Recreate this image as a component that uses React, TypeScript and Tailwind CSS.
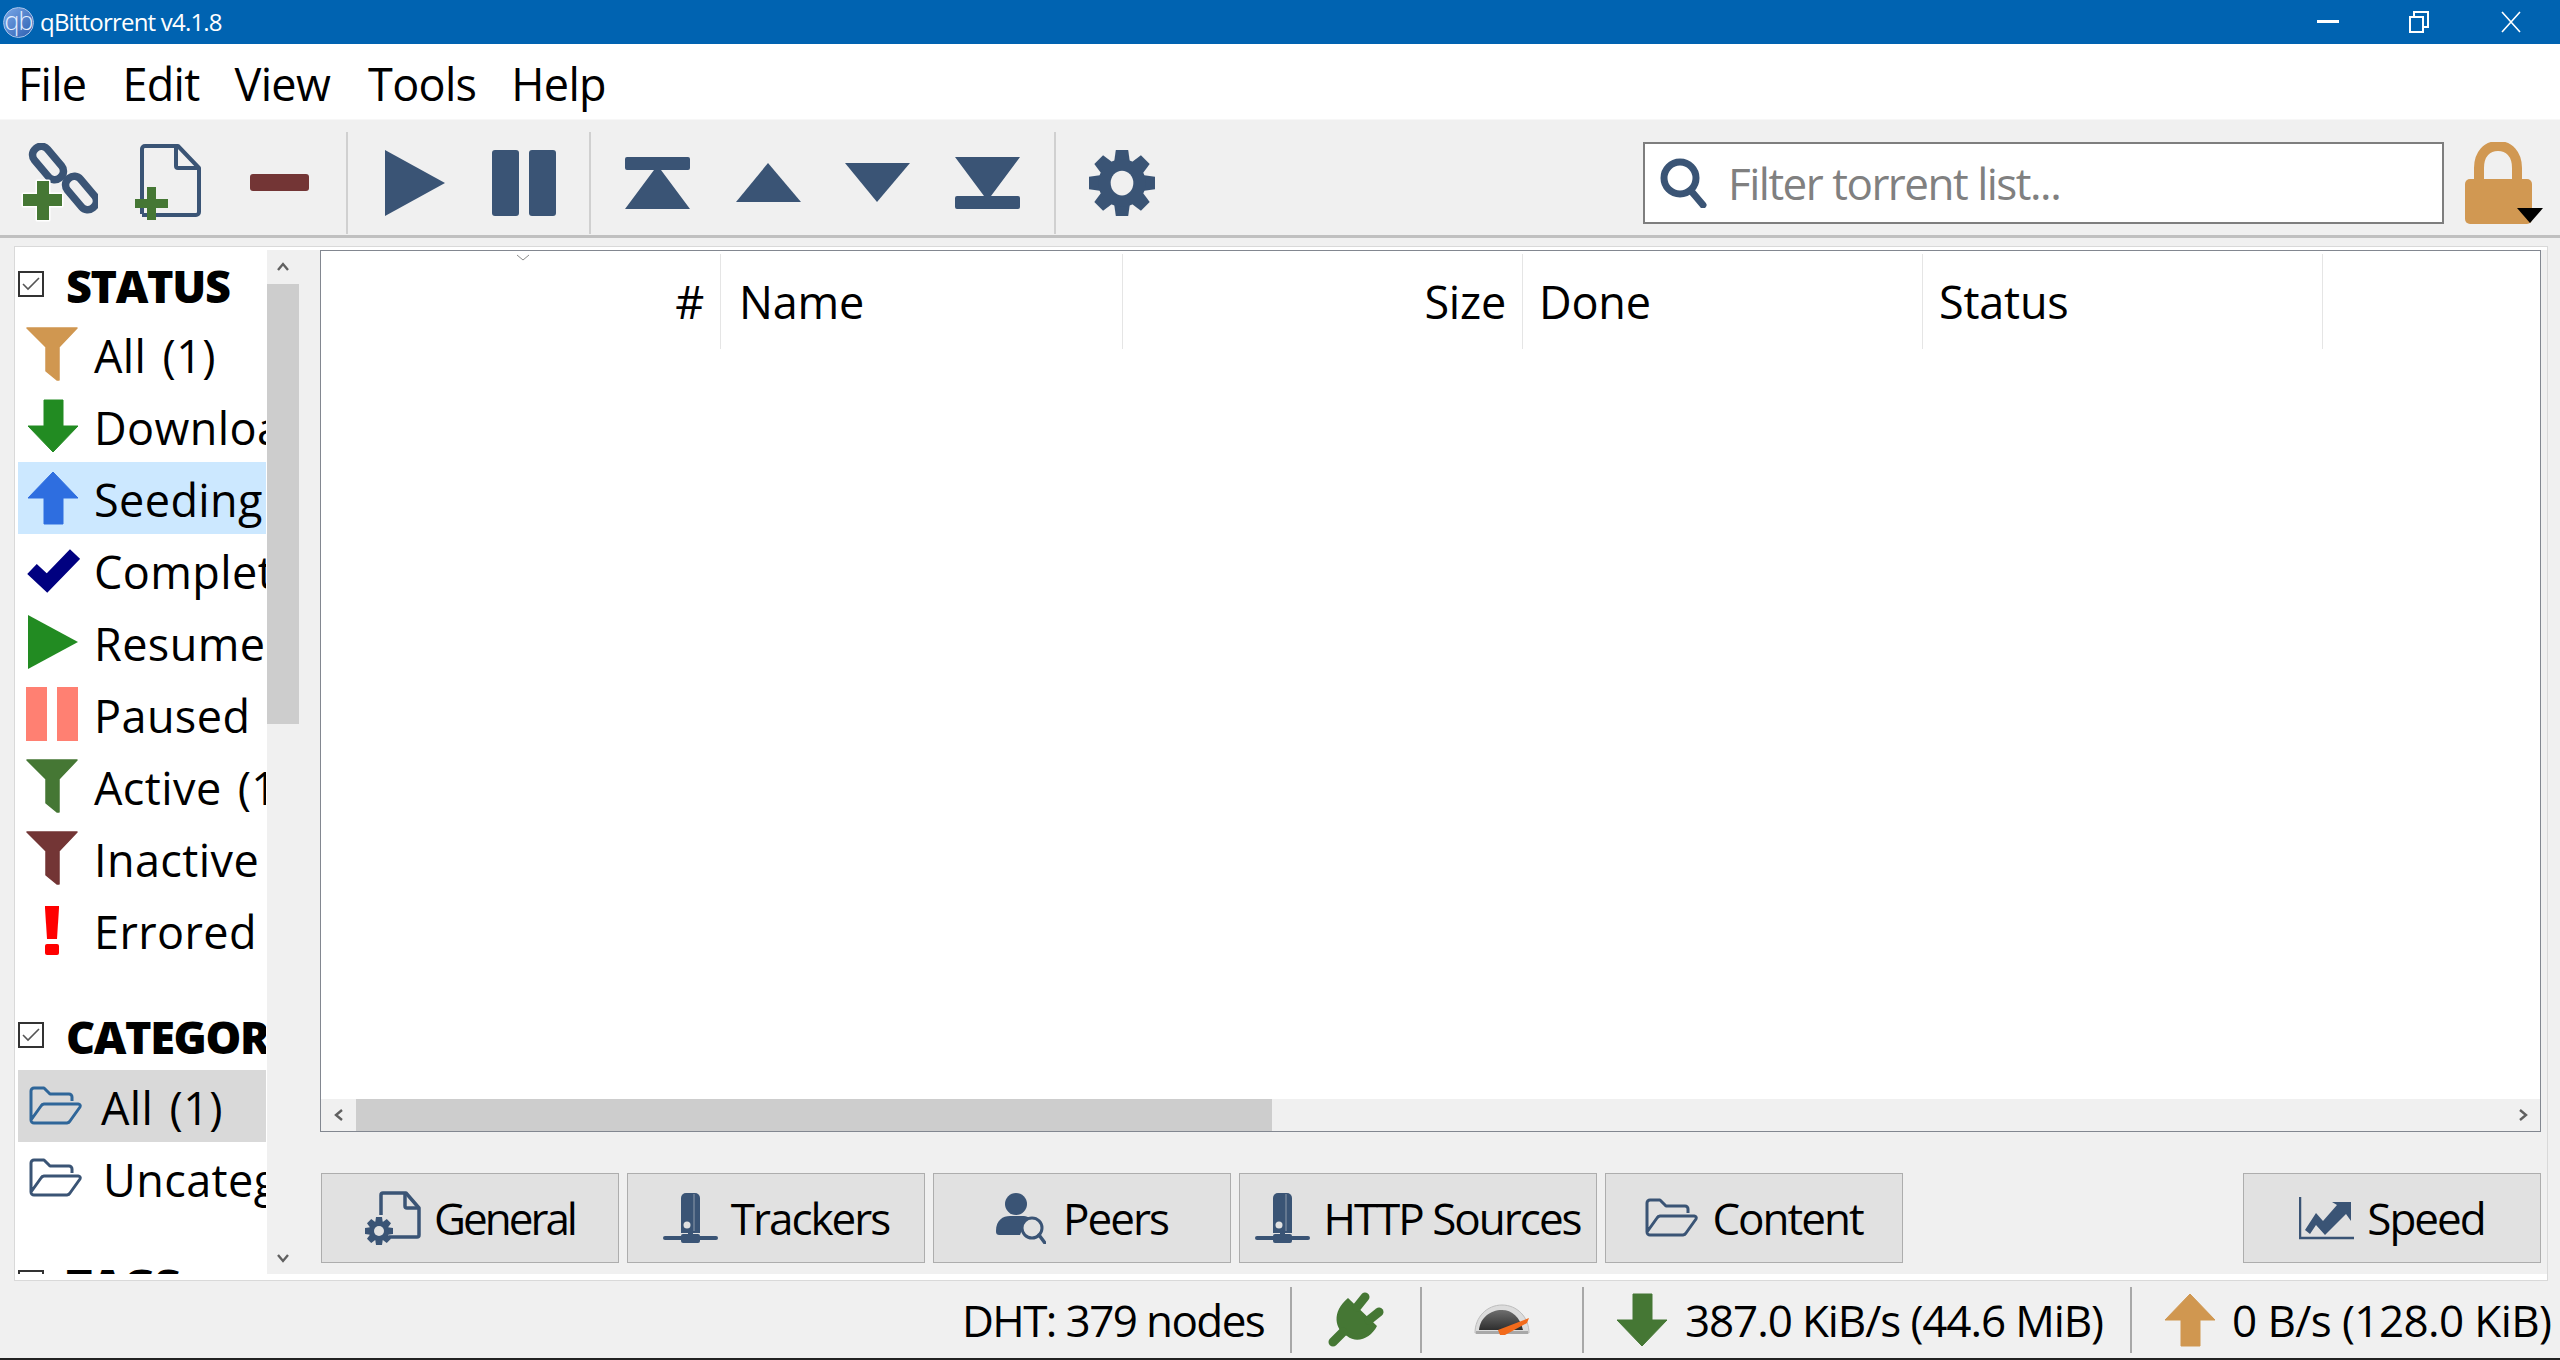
import React from 'react';

const NAVY = '#3a5475';

function Funnel({ color }: { color: string }) {
  return (
    <svg width="54" height="54" viewBox="0 0 54 54">
      <path d="M1 1H51L33 20V53L31 53L20 44V20Z" fill={color} stroke={color} strokeWidth="1.5" strokeLinejoin="round" />
    </svg>
  );
}

function ArrowDown({ color, w = 54 }: { color: string; w?: number }) {
  return (
    <svg width={w} height="54" viewBox="0 0 54 54">
      <path d="M18 1H37V27H52L27 53L2 27H18Z" fill={color} stroke={color} strokeWidth="1" strokeLinejoin="round" />
    </svg>
  );
}

function ArrowUp({ color }: { color: string }) {
  return (
    <svg width="54" height="54" viewBox="0 0 54 54">
      <path d="M18 53H37V27H52L27 1L2 27H18Z" fill={color} stroke={color} strokeWidth="1" strokeLinejoin="round" />
    </svg>
  );
}

function CheckIcon() {
  return (
    <svg width="54" height="54" viewBox="0 0 54 54">
      <path d="M6 26L21 40L49 11" fill="none" stroke="#000080" strokeWidth="14" />
    </svg>
  );
}

function PlayGreen() {
  return (
    <svg width="54" height="54" viewBox="0 0 54 54">
      <path d="M2 0L52 27L2 54Z" fill="#228b22" />
    </svg>
  );
}

function PauseRed() {
  return (
    <svg width="54" height="54" viewBox="0 0 54 54">
      <rect x="0" y="0" width="21" height="54" fill="#ff8072" />
      <rect x="31" y="0" width="21" height="54" fill="#ff8072" />
    </svg>
  );
}

function Exclaim() {
  return (
    <svg width="54" height="54" viewBox="0 0 54 54">
      <path d="M19 3H33V5L31 36H21L19 5Z" fill="#ff0000" />
      <rect x="19" y="41" width="14" height="11" rx="2" fill="#ff0000" />
    </svg>
  );
}

function Folder({ color, w = 54, h = 40, sw = 3 }: { color: string; w?: number; h?: number; sw?: number }) {
  return (
    <svg width={w} height={h} viewBox="0 0 54 40">
      <path
        d="M2 34V5a3 3 0 0 1 3-3H15L21 8H40a3 3 0 0 1 3 3V15M2 34L12 20a4 4 0 0 1 3-2H49a2 2 0 0 1 2 3L41 35a4 4 0 0 1-3 2H5a3 3 0 0 1-3-3Z"
        fill="none"
        stroke={color}
        strokeWidth={sw}
        strokeLinejoin="round"
      />
    </svg>
  );
}

function Gear({ size, hole, color = NAVY }: { size: number; hole: string; color?: string }) {
  return (
    <svg width={size} height={size} viewBox="0 0 64 64">
      {[0, 45, 90, 135, 180, 225, 270, 315].map((a) => (
        <path key={a} d="M26 0H38L40 14H24Z" fill={color} transform={`rotate(${a} 32 32)`} />
      ))}
      <circle cx="32" cy="32" r="23" fill={color} />
      <ellipse cx="32" cy="32" rx="11" ry="12" fill={hole} />
    </svg>
  );
}

function LinkIcon() {
  return (
    <svg width="78" height="79" viewBox="0 0 78 79">
      <g fill="none" stroke={NAVY} strokeWidth="7.5">
        <rect x="9" y="11.5" width="38" height="17" rx="8" transform="rotate(50 28 20)" />
        <rect x="42" y="41.5" width="38" height="17" rx="8" transform="rotate(50 61 50)" />
      </g>
      <path d="M17 38H29V51H42V63H29V77H17V63H3V51H17Z" fill="#457734" stroke="#ffffff" strokeWidth="3" paintOrder="stroke" strokeLinejoin="round" />
    </svg>
  );
}

function FileAdd() {
  return (
    <svg width="68" height="78" viewBox="0 0 68 78">
      <g fill="none" stroke={NAVY} strokeWidth="4" strokeLinejoin="round">
        <path d="M7 70V5a3 3 0 0 1 3-3H43L64 24V68a3 3 0 0 1-3 3H7" />
        <path d="M41 3V22a2 2 0 0 0 2 2H63" />
      </g>
      <path d="M12 43H21V55H33V64H21V76H12V64H0V55H12Z" fill="#457734" />
    </svg>
  );
}

function Poly({ d, w, h }: { d: string; w: number; h: number }) {
  return (
    <svg width={w} height={h} viewBox={`0 0 ${w} ${h}`}>
      <path d={d} fill={NAVY} />
    </svg>
  );
}

function DocGear() {
  return (
    <svg width="56" height="54" viewBox="0 0 56 54">
      <g fill="none" stroke={NAVY} strokeWidth="3.5" strokeLinejoin="round">
        <path d="M16 24V4a2 2 0 0 1 2-2H41L54 17V44a2 2 0 0 1-2 2H24" />
        <path d="M40 3V15a2 2 0 0 0 2 2H53" />
      </g>
      <g transform="translate(0 26)">
        {[0, 45, 90, 135, 180, 225, 270, 315].map((a) => (
          <path key={a} d="M11 0H17L18 7H10Z" fill={NAVY} transform={`rotate(${a} 14 14)`} />
        ))}
        <circle cx="14" cy="14" r="10" fill={NAVY} />
        <circle cx="14" cy="14" r="5" fill="#e1e1e1" />
      </g>
    </svg>
  );
}

function Server() {
  return (
    <svg width="55" height="50" viewBox="0 0 55 50">
      <path d="M18 5a5 5 0 0 1 5-5H32a5 5 0 0 1 5 5V40H18Z" fill={NAVY} />
      <path d="M31 1V38" stroke="#e1e1e1" strokeWidth="1" opacity="0.5" />
      <circle cx="24" cy="32" r="3.5" fill="#e1e1e1" />
      <rect x="25" y="38" width="5" height="8" fill={NAVY} />
      <rect x="0" y="43" width="55" height="4" rx="2" fill={NAVY} />
      <rect x="18" y="41" width="19" height="9" rx="2" fill={NAVY} />
    </svg>
  );
}

function PeersIcon() {
  return (
    <svg width="50" height="51" viewBox="0 0 50 51">
      <circle cx="20" cy="11" r="11" fill={NAVY} />
      <path d="M0 38C0 27 7 23 14 23H26C31 23 35 25 37 28L28 32L24 42H4C1 42 0 41 0 38Z" fill={NAVY} />
      <circle cx="36" cy="35" r="10" fill="#e1e1e1" stroke={NAVY} strokeWidth="3" />
      <path d="M43 42L49 50" stroke={NAVY} strokeWidth="3.5" strokeLinecap="round" />
    </svg>
  );
}

function SpeedIcon() {
  return (
    <svg width="55" height="43" viewBox="0 0 55 43">
      <path d="M1 0V41H55" fill="none" stroke={NAVY} strokeWidth="2.5" />
      <path d="M6 33L17 16L24 24L38 8L33 5H52V24L47 17L26 38L17 28L11 37Z" fill={NAVY} />
    </svg>
  );
}

function Plug() {
  return (
    <svg width="58" height="56" viewBox="0 0 58 56">
      <path d="M21 6L50 34C44 46 30 52 20 44C8 38 4 20 21 6Z" fill="#457734" />
      <g stroke="#457734" strokeWidth="9" strokeLinecap="round" fill="none">
        <path d="M16 40L6 50" />
        <path d="M30 15L38 5" />
        <path d="M42 28L52 20" />
      </g>
    </svg>
  );
}

function GaugeIcon() {
  return (
    <svg width="56" height="32" viewBox="0 0 56 32">
      <defs>
        <linearGradient id="gaugeFill" x1="0" y1="0" x2="0" y2="1">
          <stop offset="0" stopColor="#6e6e6e" />
          <stop offset="1" stopColor="#2e2e2e" />
        </linearGradient>
      </defs>
      <path d="M1 29C1 13 13 1 28 1C43 1 55 13 55 29Z" fill="#dcdcdc" stroke="#bdbdbd" strokeWidth="1" />
      <path d="M5 26C6 14 16 6 28 6C38 6 46 13 49 26Z" fill="url(#gaugeFill)" />
      <path d="M2 27H54V30H2Z" fill="#a8a8a8" />
      <path d="M24 26L55 14L53 19L31 31L26 31Z" fill="#f26a1b" />
    </svg>
  );
}

function Chevron({ dir, color = '#606060' }: { dir: 'up' | 'down' | 'left' | 'right'; color?: string }) {
  const d = {
    up: 'M2 10L7 4L12 10',
    down: 'M2 4L7 10L12 4',
    left: 'M10 2L4 7L10 12',
    right: 'M4 2L10 7L4 12',
  }[dir];
  return (
    <svg width="14" height="14" viewBox="0 0 14 14">
      <path d={d} fill="none" stroke={color} strokeWidth="2.4" />
    </svg>
  );
}

function Row({
  icon,
  label,
  slot = 'w-[68px]',
  bg = '',
}: {
  icon: React.ReactNode;
  label: string;
  slot?: string;
  bg?: string;
}) {
  return (
    <div className={`flex h-[72px] shrink-0 items-center overflow-hidden whitespace-nowrap pl-[8px] text-[45px] tracking-[0.4px] [word-spacing:4px] ${bg}`}>
      <div className={`flex shrink-0 items-center ${slot}`}>{icon}</div>
      <span className="pt-[3px]">{label}</span>
    </div>
  );
}

function SectionHead({ label, height }: { label: string; height: string }) {
  return (
    <div className={`flex shrink-0 items-center overflow-hidden whitespace-nowrap ${height}`}>
      <svg width="26" height="26" viewBox="0 0 26 26" className="shrink-0">
        <rect x="1" y="1" width="24" height="24" fill="#fff" stroke="#333" strokeWidth="2" />
        <path d="M5 13L10 18L21 7" fill="none" stroke="#555" strokeWidth="1.6" />
      </svg>
      <span className="ml-[22px] pt-[2px] text-[45px] font-extrabold tracking-[-1.4px]">{label}</span>
    </div>
  );
}

function Tab({
  icon,
  label,
  width,
  gap = 'gap-[13px]',
  track = 'tracking-[-2px]',
}: {
  icon: React.ReactNode;
  label: string;
  width: string;
  gap?: string;
  track?: string;
}) {
  return (
    <div className={`flex h-[90px] shrink-0 items-center justify-center border border-[#adadad] bg-[#e1e1e1] ${width} ${gap} ${track}`}>
      {icon}
      <span>{label}</span>
    </div>
  );
}

function HeadCell({ label, width, right }: { label?: string; width: string; right?: boolean }) {
  return (
    <div className={`flex h-full shrink-0 items-center border-r border-[#e5e5e5] px-[16px] ${width} ${right ? 'justify-end' : ''}`}>
      {label}
    </div>
  );
}

function Sep() {
  return <div className="h-[66px] w-[2px] shrink-0 bg-[#a8a8a8]" />;
}

export default function App() {
  return (
    <div className="flex h-[1360px] w-[2560px] flex-col overflow-hidden bg-[#f0f0f0] font-['Open_Sans','Noto_Sans',sans-serif] text-[44px] leading-none tracking-[-1.5px] text-black">
      {/* title bar */}
      <div className="flex h-[44px] shrink-0 items-center bg-[#0063b1] text-white">
        <div className="ml-[3px] flex h-[31px] w-[31px] items-center justify-center rounded-full border border-[#a8c4ea] bg-gradient-to-br from-[#7aa8e8] to-[#2d5fb0] pb-[3px] text-[25px] font-light tracking-[-1px] text-[#e6f0ff]">
          qb
        </div>
        <span className="ml-[6px] text-[24px] tracking-[-0.8px]">qBittorrent v4.1.8</span>
        <div className="ml-auto flex items-center">
          <svg width="22" height="4" viewBox="0 0 22 4" className="mr-[70px]">
            <rect width="22" height="3" fill="#fff" />
          </svg>
          <svg width="20" height="22" viewBox="0 0 20 22" className="mr-[72px]">
            <path d="M1 6H14V21H1ZM5 6V1H19V16H14" fill="none" stroke="#fff" strokeWidth="2" />
          </svg>
          <svg width="20" height="22" viewBox="0 0 20 22" className="mr-[39px]">
            <path d="M1 1L19 21M19 1L1 21" fill="none" stroke="#fff" strokeWidth="1.6" />
          </svg>
        </div>
      </div>

      {/* menu bar */}
      <div className="flex h-[75px] shrink-0 items-center bg-white pt-[4px] text-[45px] tracking-[-0.7px]">
        <span className="ml-[18px]">File</span>
        <span className="ml-[36px]">Edit</span>
        <span className="ml-[35px]">View</span>
        <span className="ml-[38px]">Tools</span>
        <span className="ml-[35px]">Help</span>
      </div>

      {/* toolbar */}
      <div className="flex h-[119px] shrink-0 items-center border-t border-b-[3px] border-t-[#f7f7f7] border-b-[#c0c0c0] pt-[10px]">
        <div className="ml-[20px] shrink-0"><LinkIcon /></div>
        <div className="ml-[37px] shrink-0"><FileAdd /></div>
        <div className="ml-[47px] h-[17px] w-[59px] shrink-0 rounded-[3px] bg-[#733535]" />
        <div className="ml-[37px] h-[102px] w-[2px] shrink-0 bg-[#d0d0d0]" />
        <div className="ml-[37px] shrink-0"><Poly w={60} h={66} d="M0 0L60 33L0 66Z" /></div>
        <div className="ml-[47px] flex shrink-0 gap-[10px]">
          <div className="h-[66px] w-[27px] rounded-[3px] bg-[#3a5475]" />
          <div className="h-[66px] w-[27px] rounded-[3px] bg-[#3a5475]" />
        </div>
        <div className="ml-[33px] h-[102px] w-[2px] shrink-0 bg-[#d0d0d0]" />
        <div className="ml-[34px] shrink-0"><Poly w={65} h={52} d="M2 0H63Q65 0 65 2V11Q65 13 63 13H36L65 52H0L29 13H2Q0 13 0 11V2Q0 0 2 0Z" /></div>
        <div className="ml-[46px] shrink-0"><Poly w={65} h={39} d="M32 0L65 39H0Z" /></div>
        <div className="ml-[44px] shrink-0"><Poly w={65} h={39} d="M0 0H65L32 39Z" /></div>
        <div className="ml-[45px] shrink-0"><Poly w={65} h={52} d="M0 0H65L36 39H63Q65 39 65 41V50Q65 52 63 52H2Q0 52 0 50V41Q0 39 2 39H29Z" /></div>
        <div className="ml-[34px] h-[102px] w-[2px] shrink-0 bg-[#d0d0d0]" />
        <div className="ml-[33px] shrink-0"><Gear size={66} hole="#f0f0f0" /></div>

        <div className="ml-[488px] flex h-[82px] w-[801px] shrink-0 items-center border-2 border-[#7e7e7e] bg-white">
          <svg width="48" height="50" viewBox="0 0 48 50" className="ml-[15px] shrink-0">
            <circle cx="20" cy="20" r="16" fill="none" stroke={NAVY} strokeWidth="7" />
            <path d="M32 34L43 47" stroke={NAVY} strokeWidth="7" strokeLinecap="round" />
          </svg>
          <span className="ml-[20px] text-[#808080]">Filter torrent list...</span>
        </div>
        <div className="relative ml-[21px] h-[82px] w-[67px] shrink-0">
          <svg width="67" height="82" viewBox="0 0 67 82">
            <path d="M14 40V26C14 12 22 4 33 4C44 4 52 12 52 26V40" fill="none" stroke="#d19852" strokeWidth="10" />
            <rect x="0" y="37" width="67" height="45" rx="5" fill="#d19852" />
          </svg>
          <div className="absolute left-[52px] top-[66px] h-0 w-0 border-x-[13px] border-t-[15px] border-x-transparent border-t-black" />
        </div>
      </div>

      {/* central frame */}
      <div className="ml-[14px] mr-[12px] mt-[8px] flex h-[1035px] shrink-0 flex-col border border-[#d9d9d9] bg-white">
        <div className="mt-[3px] flex h-[1024px] shrink-0">
          {/* side panel */}
          <div className="ml-[3px] flex w-[248px] shrink-0 flex-col overflow-hidden bg-white">
            <SectionHead label="STATUS" height="h-[68px]" />
            <Row icon={<Funnel color="#d09750" />} label="All (1)" />
            <Row icon={<ArrowDown color="#228b22" />} label="Downloading (0)" />
            <Row icon={<ArrowUp color="#2e6ee0" />} label="Seeding (1)" bg="bg-[#cce8ff]" />
            <Row icon={<CheckIcon />} label="Completed (0)" />
            <Row icon={<PlayGreen />} label="Resumed (1)" />
            <Row icon={<PauseRed />} label="Paused (0)" />
            <Row icon={<Funnel color="#457734" />} label="Active (1)" />
            <Row icon={<Funnel color="#733535" />} label="Inactive (0)" />
            <Row icon={<Exclaim />} label="Errored (0)" />
            <div className="h-[34px] shrink-0" />
            <SectionHead label="CATEGORIES" height="h-[70px]" />
            <Row icon={<div className="ml-[3px]"><Folder color="#2f6699" /></div>} label="All (1)" slot="w-[75px]" bg="bg-[#d9d9d9]" />
            <Row icon={<div className="ml-[3px]"><Folder color={NAVY} /></div>} label="Uncategorized (0)" slot="w-[77px]" />
            <div className="h-[34px] shrink-0" />
            <SectionHead label="TAGS" height="h-[70px]" />
          </div>

          {/* side scrollbar */}
          <div className="ml-px flex w-[32px] shrink-0 flex-col bg-[#f0f0f0]">
            <div className="flex h-[34px] shrink-0 items-center justify-center">
              <Chevron dir="up" />
            </div>
            <div className="h-[440px] shrink-0 bg-[#cdcdcd]" />
            <div className="flex flex-1 items-end justify-center pb-[9px]">
              <Chevron dir="down" />
            </div>
          </div>

          {/* main column */}
          <div className="flex min-w-0 flex-1 flex-col bg-[#f0f0f0] pl-[21px]">
            <div className="relative flex h-[882px] w-[2221px] shrink-0 flex-col border border-[#828790] bg-white">
              <div className="absolute left-[195px] top-[3px]">
                <svg width="14" height="7" viewBox="0 0 14 7">
                  <path d="M1 1L7 6L13 1" fill="none" stroke="#8a8a8a" strokeWidth="1" />
                </svg>
              </div>
              <div className="flex h-[98px] shrink-0 items-center pt-[3px] text-[45px] tracking-[-0.2px]">
                <HeadCell label="#" width="w-[400px]" right />
                <HeadCell label="Name" width="w-[402px] !px-[18px]" />
                <HeadCell label="Size" width="w-[400px]" right />
                <HeadCell label="Done" width="w-[400px] !px-[16px]" />
                <HeadCell label="Status" width="w-[400px]" />
              </div>
              <div className="flex-1" />
              <div className="flex h-[32px] shrink-0 bg-[#f0f0f0]">
                <div className="flex w-[35px] shrink-0 items-center justify-center">
                  <Chevron dir="left" />
                </div>
                <div className="w-[916px] shrink-0 bg-[#cdcdcd]" />
                <div className="ml-auto flex w-[35px] shrink-0 items-center justify-center">
                  <Chevron dir="right" />
                </div>
              </div>
            </div>

            <div className="ml-px mt-[41px] flex w-[2220px] shrink-0 gap-[8px]">
              <Tab icon={<DocGear />} label="General" width="w-[298px]" track="tracking-[-3px]" />
              <Tab icon={<Server />} label="Trackers" width="w-[298px]" />
              <Tab icon={<PeersIcon />} label="Peers" width="w-[298px]" gap="gap-[17px]" />
              <Tab icon={<Server />} label="HTTP Sources" width="w-[358px]" />
              <Tab icon={<Folder color={NAVY} w={54} h={42} />} label="Content" width="w-[298px]" />
              <div className="flex-1" />
              <Tab icon={<SpeedIcon />} label="Speed" width="w-[298px]" />
            </div>
          </div>
        </div>
      </div>

      {/* status bar */}
      <div className="flex h-[77px] shrink-0 items-center whitespace-nowrap">
        <span className="ml-[962px] w-[301px] shrink-0 tracking-[-1.6px]">DHT: 379 nodes</span>
        <div className="ml-[27px]"><Sep /></div>
        <div className="ml-[35px] shrink-0"><Plug /></div>
        <div className="ml-[35px]"><Sep /></div>
        <div className="ml-[52px] shrink-0"><GaugeIcon /></div>
        <div className="ml-[52px]"><Sep /></div>
        <div className="ml-[31px] shrink-0"><ArrowDown color="#457734" /></div>
        <span className="ml-[16px] w-[417px] shrink-0 tracking-[-1.1px]">387.0 KiB/s (44.6 MiB)</span>
        <div className="ml-[28px]"><Sep /></div>
        <div className="ml-[31px] shrink-0"><ArrowUp color="#d09750" /></div>
        <span className="ml-[15px] w-[315px] shrink-0 tracking-[-0.6px]">0 B/s (128.0 KiB)</span>
      </div>
      <div className="h-[2px] shrink-0 bg-[#222]" />
    </div>
  );
}
